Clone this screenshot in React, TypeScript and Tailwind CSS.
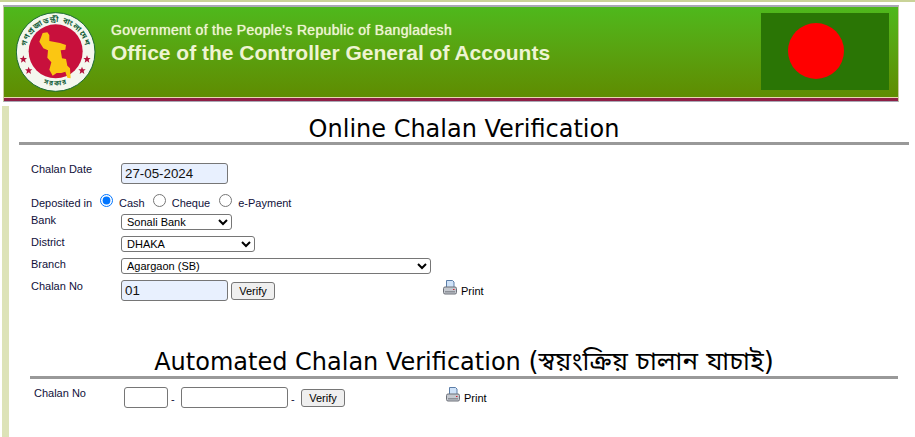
const sans = "font-['Liberation_Sans',Arial,sans-serif]";

function Logo() {
  return (
    <svg viewBox="18 9 240 240" className="w-[80px] h-[80px] shrink-0 -translate-y-[2px]">
      <defs>
        <path id="topArc" d="M 49.5 150 A 90 90 0 1 1 224.5 150" />
        <path id="bottomArc" d="M 64 196 A 96 96 0 0 0 210 196" />
      </defs>
      <circle cx="137" cy="129" r="118" fill="#f4f7ee" stroke="#1d6b35" strokeWidth="3" />
      <circle cx="137" cy="127" r="81" fill="#c8103c" />
      <text fontSize="23" fill="#14603a" fontWeight="700" letterSpacing="3" fontFamily="'Noto Sans Bengali','Noto Sans',sans-serif">
        <textPath href="#topArc" startOffset="50%" textAnchor="middle">গণপ্রজাতন্ত্রী বাংলাদেশ</textPath>
      </text>
      <text fontSize="20" fill="#14603a" fontWeight="700" letterSpacing="4" fontFamily="'Noto Sans Bengali','Noto Sans',sans-serif">
        <textPath href="#bottomArc" startOffset="50%" textAnchor="middle">সরকার</textPath>
      </text>
      <path
        d="M88 98 L98 72 L112 70 L118 78 L118 96 L150 102 L168 108 L166 122 L152 124 L156 148 L168 150 L172 170 L180 178 L182 208 L172 206 L166 188 L154 192 L140 192 L128 200 L118 182 L124 160 L112 146 L114 124 L100 118 Z"
        fill="#fbc612"
      />
      {[
        [40, 151],
        [231, 151],
        [56, 185],
        [216, 185],
      ].map(([x, y]) => (
        <polygon
          key={x}
          transform={`translate(${x} ${y})`}
          points="0,-12 3,-4 11,-4 5,1 7,10 0,5 -7,10 -5,1 -11,-4 -3,-4"
          fill="#b5123c"
        />
      ))}
    </svg>
  );
}

function PrintIcon() {
  return (
    <svg viewBox="0 0 14 15" className="w-[14px] h-[15px] shrink-0">
      <path d="M3.5 .5H9.5L11 2V8H3.5Z" fill="#cfe2f8" stroke="#5c7ea8" />
      <rect x=".5" y="7" width="13" height="7" rx="1.5" fill="#c4c8cf" stroke="#6c7078" />
      <rect x="2" y="11" width="10" height="1.5" fill="#8c9098" />
      <rect x="10" y="9" width="1.5" height="1" fill="#d02030" />
    </svg>
  );
}

function PrintLink() {
  return (
    <a className="flex items-start gap-[4px] text-[11px] leading-[13px] text-black">
      <PrintIcon />
      <span className="mt-[5px]">Print</span>
    </a>
  );
}

function VerifyButton() {
  return (
    <button className="block h-[18px] w-[44px] rounded-[3px] border border-[#767676] bg-[#efefef] text-[11px] leading-none text-black">
      Verify
    </button>
  );
}

function Label({ children }: { children: string }) {
  return <label className="w-[90px] shrink-0 text-[11px] leading-[13px] text-[#10103a]">{children}</label>;
}

const selectClass =
  "h-[16px] rounded-[3px] border border-[#767676] bg-white pl-[1px] text-[11px] leading-none text-black";

export default function App() {
  return (
    <div className={`${sans} h-[437px] w-[915px] overflow-hidden bg-white`}>
      <div className="h-[2px] bg-[#c9d398]" />

      <header className="ml-[3px] mt-[3px] flex h-[97px] w-[896px] items-center border-x border-x-[#c9c9a0] border-t-2 border-t-[#a8a8b4] border-b border-b-[#a8a8b4] bg-gradient-to-b from-[#4eb81c] to-[#5f8a00] pl-[12px] pr-[9px] shadow-[inset_0_-3px_0_#8e1f45,inset_0_-4px_0_#e8d8b0]">
        <Logo />
        <div className="ml-[15px] flex -translate-y-[11px] flex-col text-[#eef4d2]">
          <div className="text-[14px] leading-[16px] tracking-[0.33px] [text-shadow:0_0_1px_#eef4d2]">
            Government of the People's Republic of Bangladesh
          </div>
          <div className="mt-[3px] text-[21px] font-bold leading-[24px]">
            Office of the Controller General of Accounts
          </div>
        </div>
        <div className="ml-auto flex h-[77px] w-[128px] -translate-y-[3px] items-center bg-[#2a7505] pl-[27px]">
          <div className="h-[56px] w-[56px] rounded-full bg-[#ff0000]" />
        </div>
      </header>

      <div className="ml-[2px] mt-[4px] flex h-[332px]">
        <div className="w-[7px] shrink-0 bg-[#dde3b8]" />

        <main className="flex-1">
          <section className="ml-[10px] mr-[6px]">
            <h1 className="h-[36px] pt-[8px] text-center font-['DejaVu_Sans',sans-serif] text-[24px] leading-[30px] text-black">
              Online Chalan Verification
            </h1>
            <div className="h-[3px] bg-[#999999]" />

            <form className="ml-[12px] mt-[18px] flex flex-col">
              <div className="flex h-[21px]">
                <Label>Chalan Date</Label>
                <input
                  defaultValue="27-05-2024"
                  className="h-[21px] w-[107px] rounded-[3px] border border-[#767676] bg-[#e8f0fe] px-[3px] text-[13.33px] text-[#111]"
                />
              </div>

              <div className="mt-[10px] flex h-[15px] items-center text-[11px] leading-[13px] text-[#10103a]">
                <span className="mt-[3px] w-[69px]">Deposited in</span>
                <input type="radio" name="mode" defaultChecked className="m-0 h-[13px] w-[13px] -translate-y-[1px]" />
                <span className="ml-[6px] mt-[3px]">Cash</span>
                <input type="radio" name="mode" className="ml-[8px] h-[13px] w-[13px] -translate-y-[1px]" />
                <span className="ml-[6px] mt-[3px]">Cheque</span>
                <input type="radio" name="mode" className="ml-[9px] h-[13px] w-[13px] -translate-y-[1px]" />
                <span className="ml-[6px] mt-[3px]">e-Payment</span>
              </div>

              <div className="mt-[5px] flex h-[16px]">
                <Label>Bank</Label>
                <select className={`${selectClass} w-[111px]`}>
                  <option>Sonali Bank</option>
                </select>
              </div>
              <div className="mt-[6px] flex h-[16px]">
                <Label>District</Label>
                <select className={`${selectClass} w-[134px]`}>
                  <option>DHAKA</option>
                </select>
              </div>
              <div className="mt-[6px] flex h-[16px]">
                <Label>Branch</Label>
                <select className={`${selectClass} w-[310px]`}>
                  <option>Agargaon (SB)</option>
                </select>
              </div>
              <div className="mt-[6px] flex h-[21px]">
                <Label>Chalan No</Label>
                <input
                  defaultValue="01"
                  className="h-[21px] w-[107px] rounded-[3px] border border-[#767676] bg-[#e8f0fe] px-[3px] text-[13.33px] text-[#111]"
                />
                <div className="ml-[3px] mt-[2px]">
                  <VerifyButton />
                </div>
                <div className="ml-[168px]">
                  <PrintLink />
                </div>
              </div>
            </form>
          </section>

          <section className="ml-[21px] mr-[17px] mt-[44px]">
            <h2 className="h-[31px] whitespace-nowrap text-center font-['DejaVu_Sans','Noto_Sans_Bengali','Noto_Sans',sans-serif] text-[24px] leading-[32px] text-black">
              Automated Chalan Verification <span className="text-[25.8px]">(স্বয়ংক্রিয় চালান যাচাই)</span>
            </h2>
            <div className="h-[3px] bg-[#999999]" />

            <div className="ml-[4px] mt-[8px] flex h-[21px] items-start text-[11px] text-[#10103a]">
              <label className="w-[90px] shrink-0 leading-[13px]">Chalan No</label>
              <input className="h-[21px] w-[44px] rounded-[3px] border border-[#767676] bg-white" />
              <span className="ml-[3px] mt-[6px] w-[10px] leading-[13px]">-</span>
              <input className="h-[21px] w-[107px] rounded-[3px] border border-[#767676] bg-white" />
              <span className="ml-[3px] mt-[6px] w-[10px] leading-[13px]">-</span>
              <div className="mt-[2px]">
                <VerifyButton />
              </div>
              <div className="ml-[101px]">
                <PrintLink />
              </div>
            </div>
          </section>
        </main>
      </div>
    </div>
  );
}
